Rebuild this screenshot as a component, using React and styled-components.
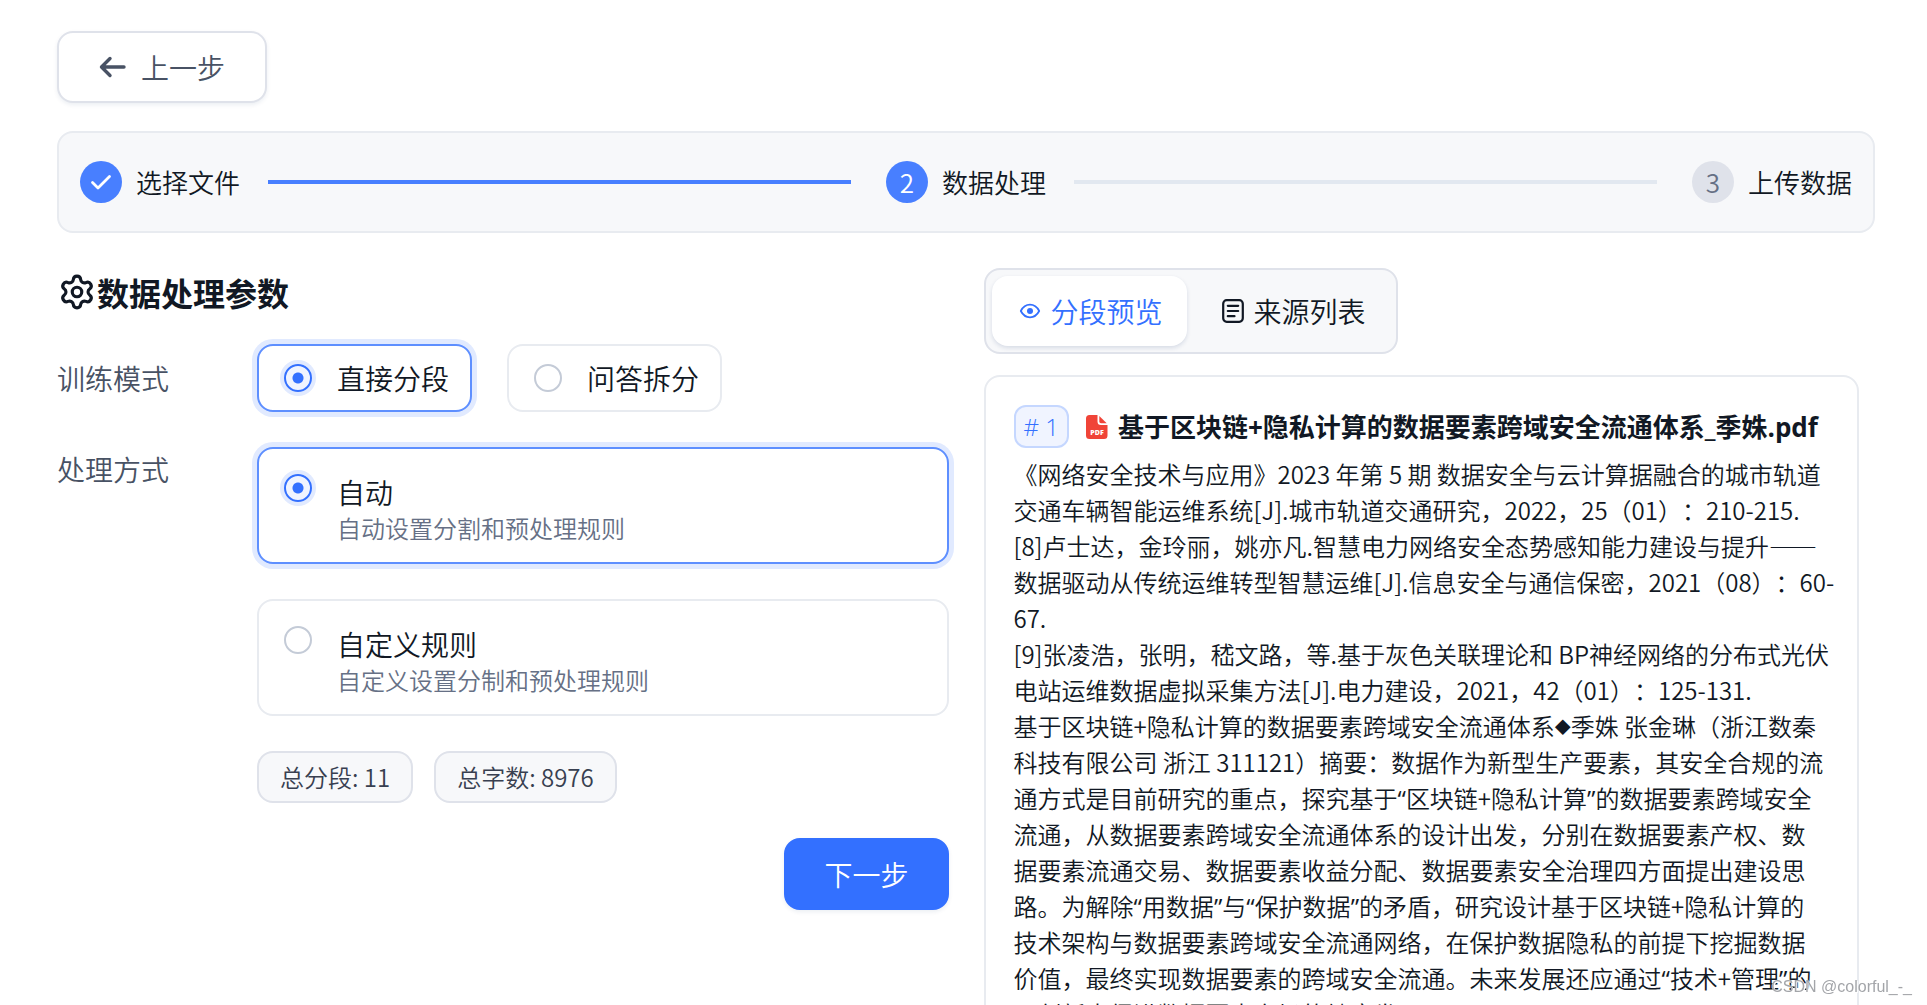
import React, { useState } from 'react';
import styled, { createGlobalStyle } from 'styled-components';
import { Settings } from 'lucide-react';

const GlobalStyle = createGlobalStyle`
	* {
		box-sizing: border-box;
	}
	body {
		margin: 0;
		background: #fff;
		color: #111824;
		font-family: "Noto Sans CJK SC", sans-serif;
		font-weight: 350;
		font-size: 28px;
		text-spacing-trim: space-all;
	}
	button, input {
		font: inherit;
		margin: 0;
	}
`;

const Page = styled.div`
	height: 100vh;
	overflow: hidden;
	padding: 31px 52px 0 57px;
`;

const Button = styled.button`
	display: flex;
	align-items: center;
	gap: 14px;
	height: 72px;
	padding: 0 ${props => (props.$primary ? '38px' : '40px')};
	border: 2px solid ${props => (props.$primary ? '#3370ff' : '#dfe2ea')};
	border-radius: 16px;
	background: ${props => (props.$primary ? '#3370ff' : '#fff')};
	color: ${props => (props.$primary ? '#fff' : '#485264')};
	box-shadow: 0 2px 4px rgba(19, 51, 107, 0.08);
	line-height: 40px;
	cursor: pointer;
`;

const Steps = styled.ol`
	display: flex;
	align-items: center;
	margin: 28px 0 35px;
	padding: 28px 21px;
	list-style: none;
	border: 2px solid #e8ebf0;
	border-radius: 16px;
	background: #f7f8fa;
	font-size: 26px;
`;

const Step = styled.li`
	display: flex;
	align-items: center;
	gap: 14px;
	line-height: 42px;
	flex: ${props => (props.$last ? 'none' : '1')};
`;

const StepMark = styled.span`
	display: flex;
	align-items: center;
	justify-content: center;
	width: 42px;
	height: 42px;
	border-radius: 50%;
	background: ${props => (props.$on ? '#487fff' : '#dfe2ea')};
	color: ${props => (props.$on ? '#fff' : '#667085')};
`;

const StepLine = styled.span`
	flex: 1;
	height: 4px;
	margin: 0 35px 0 14px;
	background: ${props => (props.$on ? '#487fff' : '#e2e8f0')};
`;

const Columns = styled.main`
	display: grid;
	grid-template-columns: minmax(0, 1fr) minmax(0, 1fr);
	gap: 35px;
`;

const Title = styled.h1`
	display: flex;
	align-items: center;
	gap: 1px;
	margin: 0 0 28px;
	padding-left: 1px;
	font-size: 32px;
	font-weight: 700;
	line-height: 48px;
`;

const Field = styled.div`
	display: grid;
	grid-template-columns: 200px minmax(0, 1fr);
	margin-bottom: 35px;
`;

const FieldLabel = styled.div`
	color: #485264;
	line-height: ${props => (props.$tall ? '68px' : '44px')};
`;

const Options = styled.div`
	display: flex;
	flex-direction: ${props => (props.$column ? 'column' : 'row')};
	gap: 35px;
`;

const OptionCard = styled.label`
	display: flex;
	align-items: ${props => (props.$detailed ? 'flex-start' : 'center')};
	gap: 25px;
	padding: ${props => (props.$detailed ? '25px 25px 16px' : '12px 21px 12px 25px')};
	border: 2px solid #e8ebf0;
	border-radius: 16px;
	background: #fff;
	line-height: 40px;
	cursor: pointer;

	&:has(input:checked) {
		border-color: #5e8fff;
		box-shadow: 0 0 0 5px #e1eaff;
	}
`;

const Radio = styled.input`
	appearance: none;
	flex: none;
	width: 28px;
	height: 28px;
	border: 2px solid #c4cbd7;
	border-radius: 50%;

	&:checked {
		border-color: #3370ff;
		background: radial-gradient(circle, #3370ff 5px, #f0f4ff 6px);
		box-shadow: 0 0 0 4px #e1eaff;
	}
`;

const OptionText = styled.span`
	display: flex;
	flex-direction: column;
	line-height: 36px;

	small {
		color: #667085;
		font-size: 24px;
	}
`;

const Stats = styled.div`
	display: flex;
	gap: 21px;
`;

const Stat = styled.span`
	padding: 0 21px;
	border: 2px solid #dfe2ea;
	border-radius: 16px;
	background: #f7f8fa;
	color: #383f50;
	font-size: 24px;
	line-height: 48px;
`;

const Actions = styled.div`
	display: flex;
	justify-content: flex-end;
`;

const Preview = styled.section`
	padding-right: 16px;
`;

const Tabs = styled.div`
	display: inline-flex;
	gap: 8px;
	padding: 6px;
	border: 2px solid #dfe2ea;
	border-radius: 16px;
	background: #f7f8fa;
`;

const Tab = styled.button`
	display: flex;
	align-items: center;
	gap: 7px;
	height: 70px;
	padding: 0 24px;
	border: 0;
	border-radius: 16px;
	background: ${props => (props.$active ? '#fff' : 'transparent')};
	color: ${props => (props.$active ? '#3370ff' : '#111824')};
	box-shadow: ${props => (props.$active ? '0 2px 4px rgba(19, 51, 107, 0.14)' : 'none')};
	line-height: 40px;
	cursor: pointer;
`;

const Chunk = styled.article`
	margin-top: 21px;
	padding: 28px 18px 28px 28px;
	border: 2px solid #e8ebf0;
	border-radius: 16px;
	font-size: 24px;
	line-height: 36px;

	p {
		margin: 0;
		white-space: pre-line;
	}
`;

const ChunkHeader = styled.header`
	display: flex;
	align-items: center;
	margin-bottom: 8px;
	font-family: "Open Sans", "Noto Sans CJK SC", sans-serif;

	h2 {
		margin: 0 0 0 9px;
		font-size: 26px;
		font-weight: 700;
		line-height: 36px;
		white-space: nowrap;
	}
`;

const Badge = styled.span`
	margin-right: 16px;
	padding: 0 8px;
	border: 2px solid #c5d7ff;
	border-radius: 12px;
	background: #f0f4ff;
	color: #3370ff;
	line-height: 39px;
`;

// the CJK face sets curly quotes on a full em
const Quote = styled.span`
	font-family: "Open Sans", sans-serif;
	font-weight: 400;
	line-height: 1;
`;

const Diamond = styled.span`
	font-size: 16px;
	vertical-align: 3px;
	line-height: 1;
`;

const Watermark = styled.div`
	position: fixed;
	right: 15px;
	bottom: 8px;
	color: #a3a5a9;
	font-family: "Liberation Sans", sans-serif;
	font-size: 16px;
	font-weight: 400;
	line-height: 20px;
	text-shadow: 0 0 1px #fff, 1px 1px 0 #fff;
`;

const ArrowIcon = () => (
	<svg width="28" height="28" viewBox="0 0 28 28" fill="none" stroke="currentColor" strokeWidth="3.4" strokeLinecap="round" strokeLinejoin="round" aria-hidden="true">
		<path d="M25 14H2.500M11 5.500L2.500 14L11 22.500" />
	</svg>
);

const CheckIcon = () => (
	<svg width="22" height="22" viewBox="0 0 22 22" fill="none" stroke="currentColor" strokeWidth="2.800" strokeLinecap="round" strokeLinejoin="round" aria-hidden="true">
		<path d="M2.500 11.500L8 17L19.500 5.500" />
	</svg>
);

const EyeIcon = () => (
	<svg width="28" height="28" viewBox="0 0 28 28" fill="none" aria-hidden="true">
		<path d="M4.800 14C7 9.800 10.200 7.700 14 7.700S21 9.800 23.200 14C21 18.200 17.800 20.300 14 20.300S7 18.200 4.800 14Z" stroke="currentColor" strokeWidth="1.800" strokeLinejoin="round" />
		<circle cx="14" cy="14" r="3" fill="currentColor" />
	</svg>
);

const ListIcon = () => (
	<svg width="28" height="28" viewBox="0 0 28 28" fill="none" stroke="currentColor" strokeWidth="2.200" strokeLinecap="round" aria-hidden="true">
		<rect x="4.200" y="3.200" width="19.600" height="21.600" rx="3.500" />
		<path d="M8.800 8.800H19.200M8.800 14H19.200M8.800 19.200H15.500" />
	</svg>
);

const PdfIcon = () => (
	<svg width="24" height="24" viewBox="0 0 24 24" aria-hidden="true">
		<path d="M4.500 0H12.500V6.500Q12.500 10 16 10H22.500V20.500Q22.500 24 19 24H4.500Q1 24 1 20.500V3.500Q1 0 4.500 0Z" fill="#f04438" />
		<path d="M14.300 1L21.700 8.300H16Q14.300 8.300 14.300 6.600Z" fill="#f04438" />
		<text x="12" y="19.500" fill="#fff" fontFamily="Open Sans" fontSize="7" fontWeight="800" textAnchor="middle">PDF</text>
	</svg>
);

const modes = ['直接分段', '问答拆分'];

const methods = [
	{ name: '自动', desc: '自动设置分割和预处理规则' },
	{ name: '自定义规则', desc: '自定义设置分制和预处理规则' },
];

const chunkText = `《网络安全技术与应用》2023 年第 5 期 数据安全与云计算据融合的城市轨道
交通车辆智能运维系统[J].城市轨道交通研究，2022，25（01）：210-215.
[8]卢士达，金玲丽，姚亦凡.智慧电力网络安全态势感知能力建设与提升——
数据驱动从传统运维转型智慧运维[J].信息安全与通信保密，2021（08）：60-
67.
[9]张凌浩，张明，嵇文路，等.基于灰色关联理论和 BP神经网络的分布式光伏
电站运维数据虚拟采集方法[J].电力建设，2021，42（01）：125-131.
基于区块链+隐私计算的数据要素跨域安全流通体系◆季姝 张金琳（浙江数秦
科技有限公司 浙江 311121）摘要：数据作为新型生产要素，其安全合规的流
通方式是目前研究的重点，探究基于“区块链+隐私计算”的数据要素跨域安全
流通，从数据要素跨域安全流通体系的设计出发，分别在数据要素产权、数
据要素流通交易、数据要素收益分配、数据要素安全治理四方面提出建设思
路。为解除“用数据”与“保护数据”的矛盾，研究设计基于区块链+隐私计算的
技术架构与数据要素跨域安全流通网络，在保护数据隐私的前提下挖掘数据
价值，最终实现数据要素的跨域安全流通。未来发展还应通过“技术+管理”的
双创新来促进数据要素市场的健康发展`;

const ChunkBody = ({ text }) => (
	<p>
		{text.split(/([“”◆])/).map((part, i) => {
			if (part === '◆') {
				return <Diamond key={i}>{part}</Diamond>;
			}
			if (part === '“' || part === '”') {
				return <Quote key={i}>{part}</Quote>;
			}
			return part;
		})}
	</p>
);

function App() {
	const [mode, setMode] = useState(0);
	const [method, setMethod] = useState(0);
	const [tab, setTab] = useState('preview');

	return (
		<Page lang="zh-CN">
			<GlobalStyle />
			<Button type="button"><ArrowIcon />上一步</Button>
			<Steps>
				<Step><StepMark $on><CheckIcon /></StepMark>选择文件<StepLine $on /></Step>
				<Step><StepMark $on>2</StepMark>数据处理<StepLine /></Step>
				<Step $last><StepMark>3</StepMark>上传数据</Step>
			</Steps>
			<Columns>
				<section>
					<Title><Settings size={38} aria-hidden="true" />数据处理参数</Title>
					<Field role="radiogroup" aria-labelledby="mode-label">
						<FieldLabel id="mode-label" $tall>训练模式</FieldLabel>
						<Options>
							{modes.map((name, i) => (
								<OptionCard key={name}>
									<Radio type="radio" name="mode" checked={mode === i} onChange={() => setMode(i)} />
									{name}
								</OptionCard>
							))}
						</Options>
					</Field>
					<Field role="radiogroup" aria-labelledby="method-label">
						<FieldLabel id="method-label">处理方式</FieldLabel>
						<Options $column>
							{methods.map((item, i) => (
								<OptionCard key={item.name} $detailed>
									<Radio type="radio" name="method" checked={method === i} onChange={() => setMethod(i)} />
									<OptionText>
										{item.name}
										<small>{item.desc}</small>
									</OptionText>
								</OptionCard>
							))}
						</Options>
					</Field>
					<Field>
						<span />
						<Stats>
							<Stat>总分段: 11</Stat>
							<Stat>总字数: 8976</Stat>
						</Stats>
					</Field>
					<Actions>
						<Button type="button" $primary>下一步</Button>
					</Actions>
				</section>
				<Preview>
					<Tabs role="tablist">
						<Tab type="button" role="tab" aria-selected={tab === 'preview'} $active={tab === 'preview'} onClick={() => setTab('preview')}>
							<EyeIcon />分段预览
						</Tab>
						<Tab type="button" role="tab" aria-selected={tab === 'sources'} $active={tab === 'sources'} onClick={() => setTab('sources')}>
							<ListIcon />来源列表
						</Tab>
					</Tabs>
					<Chunk>
						<ChunkHeader>
							<Badge># 1</Badge>
							<PdfIcon />
							<h2>基于区块链+隐私计算的数据要素跨域安全流通体系_季姝.pdf</h2>
						</ChunkHeader>
						<ChunkBody text={chunkText} />
					</Chunk>
				</Preview>
			</Columns>
			<Watermark>CSDN @colorful_-_</Watermark>
		</Page>
	);
}

export default App;
